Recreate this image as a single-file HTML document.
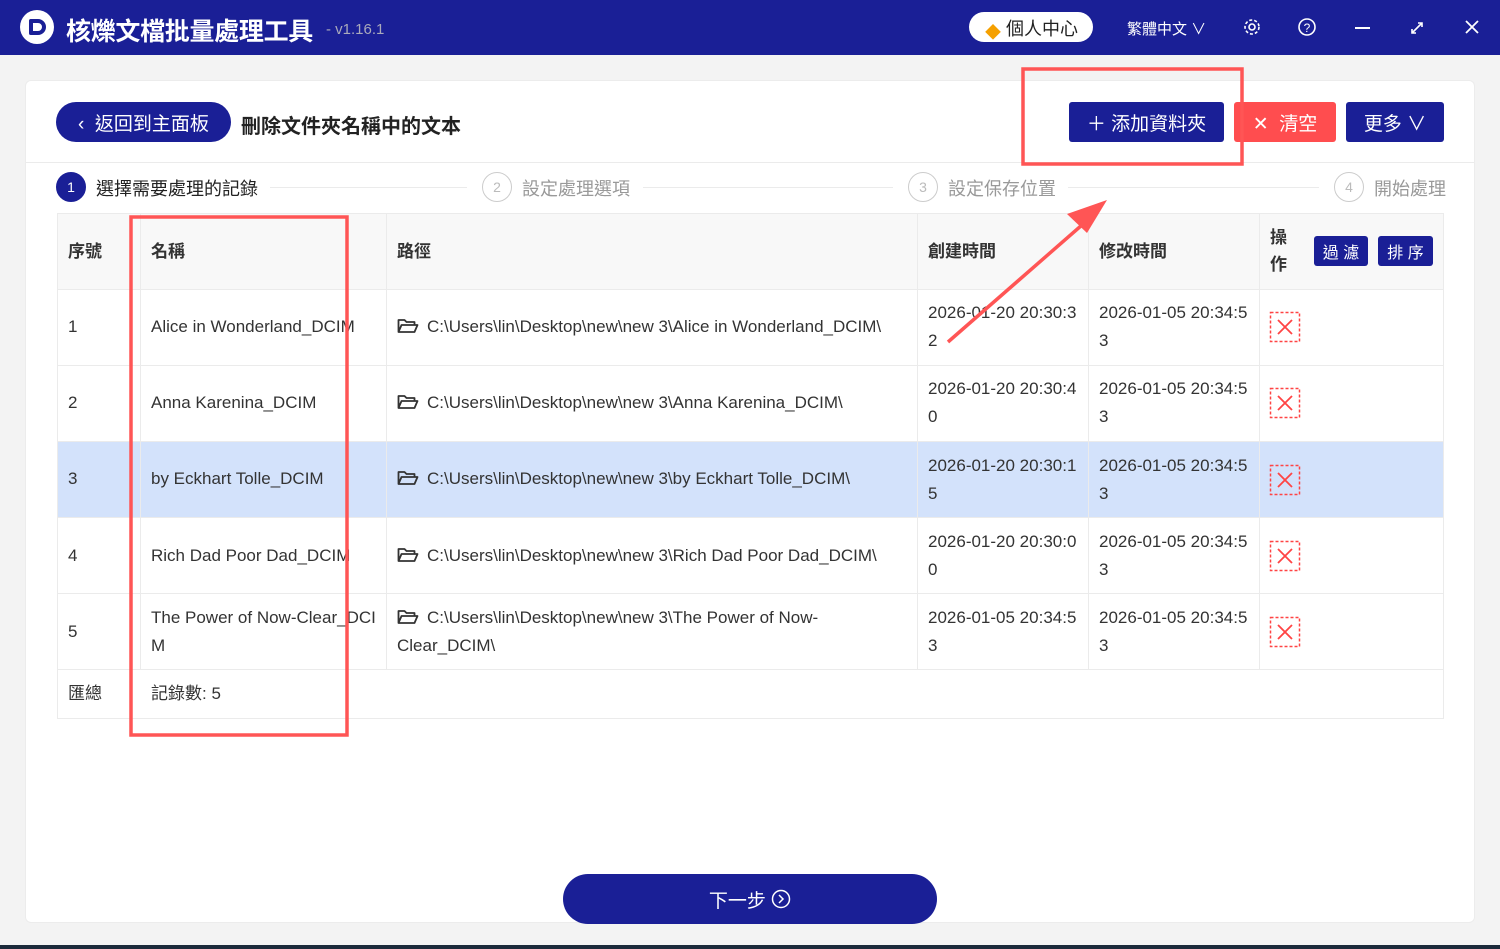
<!DOCTYPE html>
<html><head><meta charset="utf-8"><style>
*{margin:0;padding:0;box-sizing:border-box}
body{width:1500px;height:949px;background:#f3f3f3;font-family:"Liberation Sans","Noto Sans CJK TC",sans-serif;position:relative;overflow:hidden;color:#333}
.a{position:absolute}
.tb{left:0;top:0;width:1500px;height:55px;background:#1a1f96}
.t{color:#fff}
.card{left:25px;top:80px;width:1450px;height:843px;background:#fff;border:1px solid #ececec;border-radius:6px}
.btn{background:#1a1f96;color:#fff;font-size:18px;display:flex;align-items:center;justify-content:center;border-radius:3px}
.cell{position:absolute;font-size:17px;color:#333;line-height:28px}
.hl{position:absolute;background:#ebebeb}
.step{font-size:17px;color:#999}
.circ{width:30px;height:30px;border-radius:50%;border:1.5px solid #ccc;color:#bbb;font-size:14px;display:flex;align-items:center;justify-content:center}
.fd{display:inline-block;vertical-align:-2px;margin-right:8px}
</style></head><body>
<div class="a tb"></div>
<div class="a" style="left:20px;top:10px;width:34px;height:34px;border-radius:50%;background:#fff"></div>
<div class="a" style="left:29px;top:19px;width:17px;height:16px;border:4px solid #1a1f96;border-radius:2px 9px 9px 2px"></div>
<div class="a t" style="left:66px;top:12px;font-size:25px;font-weight:bold;letter-spacing:-0.3px">核爍文檔批量處理工具</div>
<div class="a" style="left:326px;top:21px;font-size:15px;color:#aab">- v1.16.1</div>
<div class="a" style="left:969px;top:12px;width:124px;height:30px;background:#fff;border-radius:15px"></div>
<div class="a" style="left:985px;top:19px;font-size:16px;color:#f5a000">◆</div>
<div class="a" style="left:1006px;top:15px;font-size:18px;color:#222">個人中心</div>
<div class="a t" style="left:1127px;top:18px;font-size:15px">繁體中文 ∨</div>
<svg class="a" style="left:1243px;top:18px" width="18" height="18" viewBox="0 0 18 18"><circle cx="9" cy="9" r="3" fill="none" stroke="#fff" stroke-width="1.6"/><circle cx="9" cy="9" r="7" fill="none" stroke="#fff" stroke-width="1.6" stroke-dasharray="3 2"/></svg>
<svg class="a" style="left:1297px;top:17px" width="20" height="20"><circle cx="10" cy="10" r="8" fill="none" stroke="#fff" stroke-width="1.6"/><text x="10" y="15" font-size="12" fill="#fff" text-anchor="middle" font-family="Liberation Sans">?</text></svg>
<div class="a" style="left:1355px;top:27px;width:15px;height:2px;background:#fff"></div>
<svg class="a" style="left:1409px;top:20px" width="16" height="16"><path d="M3 13L13 3M9 3h4v4M3 9v4h4" stroke="#fff" stroke-width="1.6" fill="none"/></svg>
<svg class="a" style="left:1464px;top:19px" width="16" height="16"><path d="M2 2L14 14M14 2L2 14" stroke="#fff" stroke-width="1.8"/></svg>

<div class="a card"></div>
<div class="a btn" style="left:56px;top:102px;width:175px;height:40px;border-radius:20px;font-size:19px">‹&nbsp;&nbsp;返回到主面板</div>
<div class="a" style="left:241px;top:110px;font-size:20px;font-weight:bold;color:#222">刪除文件夾名稱中的文本</div>
<div class="a btn" style="left:1069px;top:102px;width:155px;height:40px;font-size:19px">＋&nbsp;添加資料夾</div>
<div class="a btn" style="left:1234px;top:102px;width:102px;height:40px;background:#ff4d4f;font-size:19px">✕&nbsp;&nbsp;清空</div>
<div class="a btn" style="left:1346px;top:102px;width:98px;height:40px;font-size:19px">更多&nbsp;∨</div>
<div class="hl" style="left:26px;top:162px;width:1448px;height:1px"></div>

<div class="a circ" style="left:56px;top:172px;background:#1a1f96;border-color:#1a1f96;color:#fff">1</div>
<div class="a step" style="left:96px;top:175px;color:#222;font-size:18px">選擇需要處理的記錄</div>
<div class="hl" style="left:270px;top:187px;width:197px;height:1px"></div>
<div class="a circ" style="left:482px;top:172px">2</div>
<div class="a step" style="left:522px;top:175px;font-size:18px">設定處理選項</div>
<div class="hl" style="left:643px;top:187px;width:250px;height:1px"></div>
<div class="a circ" style="left:908px;top:172px">3</div>
<div class="a step" style="left:948px;top:175px;font-size:18px">設定保存位置</div>
<div class="hl" style="left:1068px;top:187px;width:251px;height:1px"></div>
<div class="a circ" style="left:1334px;top:172px">4</div>
<div class="a step" style="left:1374px;top:175px;font-size:18px">開始處理</div>

<div class="a" style="left:57px;top:213px;width:1387px;height:506px;border:1px solid #ebebeb"></div>
<div class="a" style="left:58px;top:214px;width:1385px;height:75px;background:#f8f8f8"></div>
<div class="a" style="left:58px;top:442px;width:1385px;height:75px;background:#d3e2fb"></div>
<div class="hl" style="left:57px;top:289px;width:1387px;height:1px"></div>
<div class="hl" style="left:57px;top:365px;width:1387px;height:1px"></div>
<div class="hl" style="left:57px;top:441px;width:1387px;height:1px"></div>
<div class="hl" style="left:57px;top:517px;width:1387px;height:1px"></div>
<div class="hl" style="left:57px;top:593px;width:1387px;height:1px"></div>
<div class="hl" style="left:57px;top:669px;width:1387px;height:1px"></div>
<div class="hl" style="left:140px;top:213px;width:1px;height:456px"></div>
<div class="hl" style="left:386px;top:213px;width:1px;height:456px"></div>
<div class="hl" style="left:917px;top:213px;width:1px;height:456px"></div>
<div class="hl" style="left:1088px;top:213px;width:1px;height:456px"></div>
<div class="hl" style="left:1259px;top:213px;width:1px;height:456px"></div>

<div class="cell" style="left:68px;top:238px;font-weight:bold">序號</div>
<div class="cell" style="left:151px;top:238px;font-weight:bold">名稱</div>
<div class="cell" style="left:397px;top:238px;font-weight:bold">路徑</div>
<div class="cell" style="left:928px;top:238px;font-weight:bold">創建時間</div>
<div class="cell" style="left:1099px;top:238px;font-weight:bold">修改時間</div>
<div class="cell" style="left:1270px;top:224px;font-weight:bold;width:20px;line-height:27px">操作</div>
<div class="a btn" style="left:1314px;top:236px;width:54px;height:30px;font-size:16px">過 濾</div>
<div class="a btn" style="left:1378px;top:236px;width:55px;height:30px;font-size:16px">排 序</div>

<div class="cell" style="left:68px;top:313px">1</div>
<div class="cell" style="left:151px;top:313px">Alice in Wonderland_DCIM</div>
<div class="cell" style="left:397px;top:313px"><svg class="fd" width="22" height="16"><path d="M1.5 14V2h6l2 2h8v3M1.5 14l3-7h16l-3 7z" fill="none" stroke="#333" stroke-width="1.8" stroke-linejoin="round"/></svg>C:\Users\lin\Desktop\new\new 3\Alice in Wonderland_DCIM\</div>
<div class="cell" style="left:928px;top:299px">2026-01-20 20:30:3<br>2</div>
<div class="cell" style="left:1099px;top:299px">2026-01-05 20:34:5<br>3</div>

<div class="cell" style="left:68px;top:389px">2</div>
<div class="cell" style="left:151px;top:389px">Anna Karenina_DCIM</div>
<div class="cell" style="left:397px;top:389px"><svg class="fd" width="22" height="16"><path d="M1.5 14V2h6l2 2h8v3M1.5 14l3-7h16l-3 7z" fill="none" stroke="#333" stroke-width="1.8" stroke-linejoin="round"/></svg>C:\Users\lin\Desktop\new\new 3\Anna Karenina_DCIM\</div>
<div class="cell" style="left:928px;top:375px">2026-01-20 20:30:4<br>0</div>
<div class="cell" style="left:1099px;top:375px">2026-01-05 20:34:5<br>3</div>

<div class="cell" style="left:68px;top:465px">3</div>
<div class="cell" style="left:151px;top:465px">by Eckhart Tolle_DCIM</div>
<div class="cell" style="left:397px;top:465px"><svg class="fd" width="22" height="16"><path d="M1.5 14V2h6l2 2h8v3M1.5 14l3-7h16l-3 7z" fill="none" stroke="#333" stroke-width="1.8" stroke-linejoin="round"/></svg>C:\Users\lin\Desktop\new\new 3\by Eckhart Tolle_DCIM\</div>
<div class="cell" style="left:928px;top:452px">2026-01-20 20:30:1<br>5</div>
<div class="cell" style="left:1099px;top:452px">2026-01-05 20:34:5<br>3</div>

<div class="cell" style="left:68px;top:542px">4</div>
<div class="cell" style="left:151px;top:542px">Rich Dad Poor Dad_DCIM</div>
<div class="cell" style="left:397px;top:542px"><svg class="fd" width="22" height="16"><path d="M1.5 14V2h6l2 2h8v3M1.5 14l3-7h16l-3 7z" fill="none" stroke="#333" stroke-width="1.8" stroke-linejoin="round"/></svg>C:\Users\lin\Desktop\new\new 3\Rich Dad Poor Dad_DCIM\</div>
<div class="cell" style="left:928px;top:528px">2026-01-20 20:30:0<br>0</div>
<div class="cell" style="left:1099px;top:528px">2026-01-05 20:34:5<br>3</div>

<div class="cell" style="left:68px;top:618px">5</div>
<div class="cell" style="left:151px;top:604px;width:228px;word-break:break-all">The Power of Now-Clear_DCIM</div>
<div class="cell" style="left:397px;top:604px;width:450px"><svg class="fd" width="22" height="16"><path d="M1.5 14V2h6l2 2h8v3M1.5 14l3-7h16l-3 7z" fill="none" stroke="#333" stroke-width="1.8" stroke-linejoin="round"/></svg>C:\Users\lin\Desktop\new\new 3\The Power of Now-Clear_DCIM\</div>
<div class="cell" style="left:928px;top:604px">2026-01-05 20:34:5<br>3</div>
<div class="cell" style="left:1099px;top:604px">2026-01-05 20:34:5<br>3</div>

<div class="cell" style="left:68px;top:680px">匯總</div>
<div class="cell" style="left:151px;top:680px">記錄數:&nbsp;5</div>

<svg class="a" style="left:0;top:0" width="1500" height="949">
<g fill="none" stroke="#f44" stroke-width="1.5" stroke-dasharray="3 2">
<rect x="1270.5" y="312.5" width="29" height="29"/><rect x="1270.5" y="388.5" width="29" height="29"/><rect x="1270.5" y="465.5" width="29" height="29"/><rect x="1270.5" y="541.5" width="29" height="29"/><rect x="1270.5" y="617.5" width="29" height="29"/></g>
<g stroke="#f44" stroke-width="1.8">
<path d="M1278 320l14 14M1292 320l-14 14"/><path d="M1278 396l14 14M1292 396l-14 14"/><path d="M1278 473l14 14M1292 473l-14 14"/><path d="M1278 549l14 14M1292 549l-14 14"/><path d="M1278 625l14 14M1292 625l-14 14"/></g>
<rect x="1023" y="69" width="219" height="95" fill="none" stroke="#f55" stroke-width="3.5"/>
<rect x="131" y="217" width="216" height="518" fill="none" stroke="#f55" stroke-width="3.5"/>
<path d="M948 342L1090 218" stroke="#f55" stroke-width="3.5"/>
<path d="M1107 200L1067 214L1087 233Z" fill="#f55"/>
</svg>

<div class="a btn" style="left:563px;top:874px;width:374px;height:50px;border-radius:25px;font-size:19px">下一步&nbsp;
<svg width="20" height="20"><circle cx="10" cy="10" r="8.5" fill="none" stroke="#fff" stroke-width="1.5"/><path d="M8 6l4 4-4 4" fill="none" stroke="#fff" stroke-width="1.5"/></svg></div>
<div class="a" style="left:0;top:945px;width:1500px;height:4px;background:#1c2a3a"></div>
</body></html>
